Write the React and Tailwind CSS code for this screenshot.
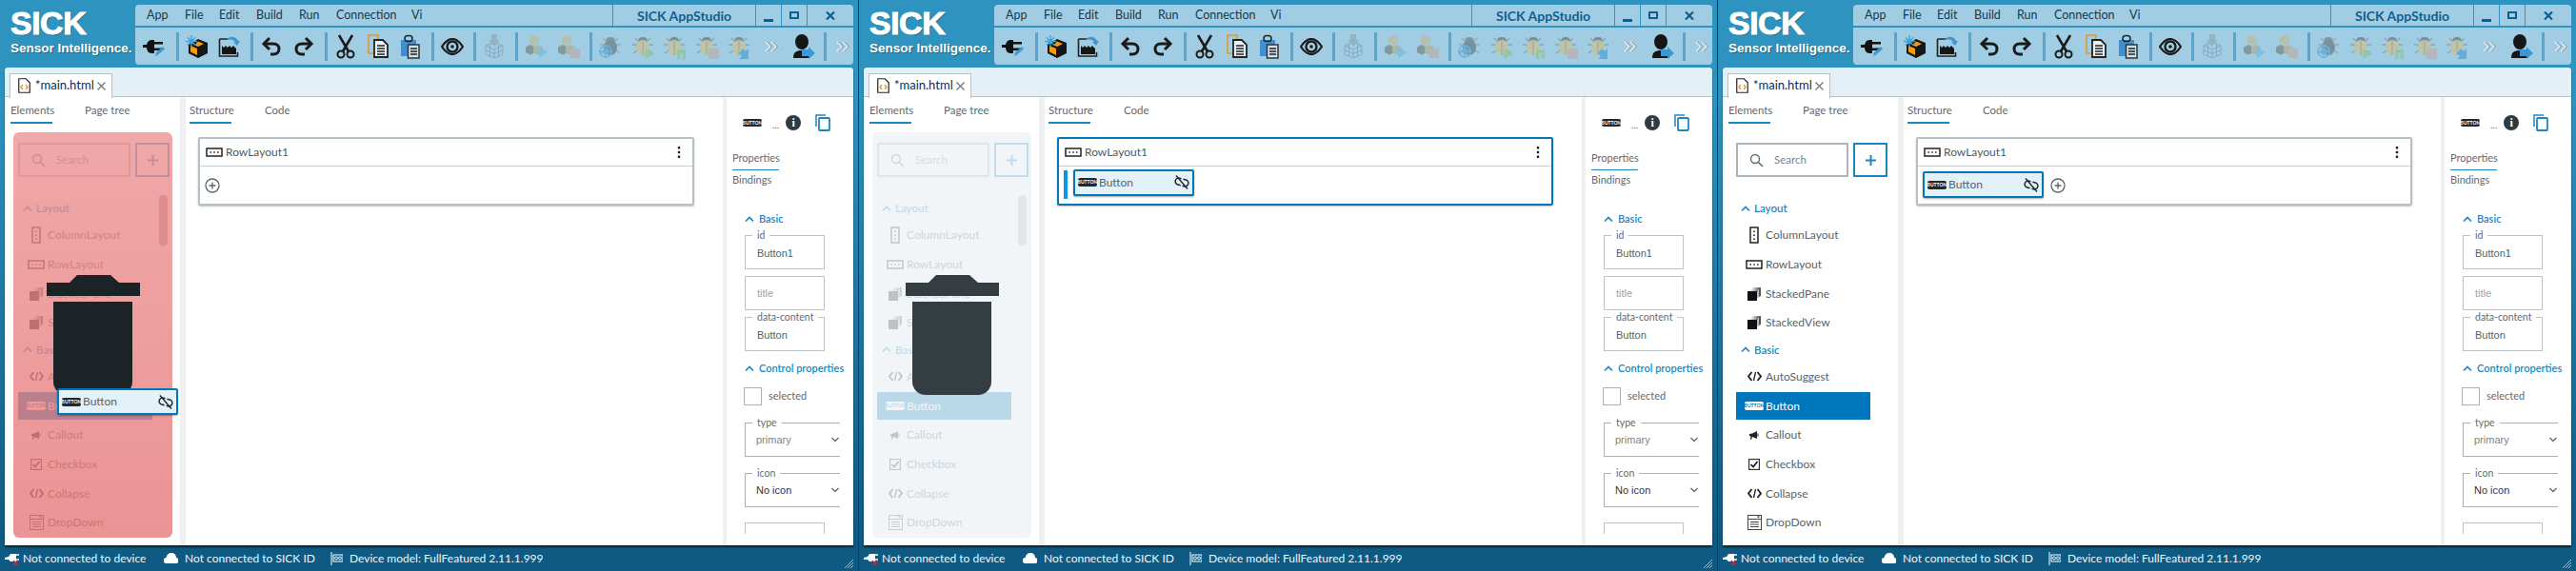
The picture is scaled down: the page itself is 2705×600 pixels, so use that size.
import React from "react";

const Svg = ({ w, h, vb, className = "", children }) => (
  <svg width={w} height={h} viewBox={vb || `0 0 ${w} ${h}`} className={`shrink-0 ${className}`}>{children}</svg>
);

const Plug = () => (
  <Svg w={24} h={22}>
    <path d="M0 9h4v3H0z" fill="#111" />
    <path d="M4 10c0-3 2-6 5-6h3v14H9c-3 0-5-3-5-6z" fill="#111" />
    <path d="M12 6h9v2.500h-9zM12 12.500h9V15h-9z" fill="#111" />
    <path d="M13 21l1-4 7-6 2 2.500-7 6z" fill="#3d9ad6" />
  </Svg>
);
const MagicBox = () => (
  <Svg w={24} h={24}>
    <path d="M13 4l10 4v11l-10 5-10-5V10z" fill="#161616" />
    <path d="M5 11l7 3v7l-7-3.500z" fill="#f59c12" />
    <path d="M13 6.500l6 2.500-6 3-3.500-1.500z" fill="#f59c12" />
    <path d="M6 0v13M0 6.500h12M2 2.500l8 8M10 2.500l-8 8" stroke="#3aa4e0" strokeWidth="1.300" />
    <circle cx="6" cy="6.500" r="2.500" fill="#3aa4e0" />
  </Svg>
);
const SaveImg = () => (
  <Svg w={24} h={24}>
    <path d="M1.500 4h9M1.500 4v18h19v-4" stroke="#222" strokeWidth="1.600" fill="none" />
    <path d="M4 20v-9l2 2 2-2 2 2 2-2 2 2 2-2 3 3v6z" fill="#161616" />
    <path d="M9 5c3-5 10-4 12 1l2 0-3 5-4-4 2 0c-2-3-6-3-9-2z" fill="#3c97d4" />
  </Svg>
);
const Undo = ({ flip }) => (
  <Svg w={22} h={22} className={flip ? "-scale-x-100" : ""}>
    <path d="M9 2L3 8l6 6" stroke="#1a1a1a" strokeWidth="3" fill="none" />
    <path d="M4 8h9c4 0 6 2.500 6 5.500S17 19 13 19h-3" stroke="#1a1a1a" strokeWidth="3" fill="none" />
  </Svg>
);
const ScissorsI = () => (
  <Svg w={20} h={26}>
    <path d="M3 1l10 17M17 1L7 18" stroke="#1a1a1a" strokeWidth="2.600" />
    <circle cx="5" cy="21" r="3.500" stroke="#1a1a1a" strokeWidth="2" fill="none" />
    <circle cx="15" cy="21" r="3.500" stroke="#1a1a1a" strokeWidth="2" fill="none" />
  </Svg>
);
const CopyI = () => (
  <Svg w={23} h={25}>
    <path d="M1 1h10v19H1z" stroke="#e09a2a" strokeWidth="1.600" fill="none" />
    <path d="M7 6h9l5 5v13H7z" fill="#e8f1f5" stroke="#222" strokeWidth="1.800" />
    <path d="M10 12h8M10 15h8M10 18h8M10 21h8" stroke="#222" strokeWidth="1.300" />
  </Svg>
);
const ClipI = () => (
  <Svg w={20} h={26}>
    <path d="M0 6h16v17H0z" fill="#3c91d6" />
    <rect x="4" y="1.500" width="8" height="6" rx="3" fill="none" stroke="#222" strokeWidth="1.500" />
    <path d="M7.500 11h11.500v14H7.500z" fill="#cfe0e8" stroke="#333" strokeWidth="1.500" />
    <path d="M10 15h7M10 18h7M10 21h7" stroke="#222" strokeWidth="1.300" />
  </Svg>
);
const EyeI = () => (
  <Svg w={24} h={18}>
    <path d="M1 9c4-6 8-8 11-8s7 2 11 8c-4 6-8 8-11 8S5 15 1 9z" fill="none" stroke="#1a1a1a" strokeWidth="2.200" />
    <circle cx="12" cy="9" r="5.500" fill="none" stroke="#1a1a1a" strokeWidth="2.400" />
    <circle cx="12" cy="9" r="1.800" fill="#1a1a1a" />
  </Svg>
);
const DeployI = () => (
  <Svg w={20} h={26} className="opacity-40">
    <path d="M1 12l9-4 9 4v9l-9 4-9-4zM1 12l9 4 9-4M10 16v9M5.500 10v13M14.500 10v13M1 16.500l9 4 9-4" fill="none" stroke="#5f7884" strokeWidth="1" />
    <path d="M7 0h6v6h3l-6 7-6-7h3z" fill="#7b8d96" />
  </Svg>
);
const Cubes = ({ overlay }) => (
  <Svg w={24} h={26}>
    <g opacity="0.55">
      <path d="M9 1l5 2.500v5.500l-5 2.500L4 9V3.500z" fill="#c7b680" />
      <path d="M5 11l5 2.500V19l-5 2.500L0 19v-5.500z" fill="#6d6f63" />
      <path d="M13 11l5 2.500V19l-5 2.500L8 19v-5.500z" fill="#b5a674" />
    </g>
    {overlay === "play" && <path d="M14 13l9 6-9 6z" fill="#7ebfe2" />}
    {overlay === "stop" && <path d="M13 15h10v10H13z" fill="#b3b6bd" />}
  </Svg>
);
const Bug = ({ overlay }) => (
  <Svg w={26} h={26}>
    <g opacity={overlay === "target" ? 0.5 : 0.6}>
      <path d="M4 4l4 4M20 4l-4 4M1 11h5M23 11h-5M2 20l4-3M22 20l-4-3" stroke="#7f8a8c" strokeWidth="1.300" />
      <ellipse cx="12" cy="6" rx="4.500" ry="3" fill="#5c6468" />
      <ellipse cx="12" cy="14" rx="7" ry="8" fill={overlay === "target" ? "#4f595e" : "#d2bf7c"} />
      {overlay !== "target" && <path d="M12 7v15" stroke="#8d8f83" strokeWidth="1" />}
    </g>
    {overlay === "target" && (
      <g fill="none" stroke="#6fb2dd" strokeWidth="1.500">
        <circle cx="7" cy="18" r="6" />
        <circle cx="7" cy="18" r="2.500" />
        <path d="M7 11v14M0 18h14" />
      </g>
    )}
    {overlay === "play" && <path d="M14 15l10 6-10 5z" fill="#93c8a6" />}
    {overlay === "pause" && <path d="M15 16h3.500v10H15zM20.500 16H24v10h-3.500z" fill="#93c8a6" />}
    {overlay === "stop" && <path d="M14 15h11v11H14z" fill="#b3b6bd" />}
    {overlay === "arrow" && <path d="M16 15l3 3 3-3v11H12l3-3-3-3z" fill="#62addd" />}
  </Svg>
);
const Chevrons = () => (
  <Svg w={14} h={12}>
    <path d="M1 1l5 5-5 5M7 1l5 5-5 5" fill="none" stroke="#f1f4f5" strokeWidth="1.300" />
    <path d="M2.500 1l5 5-5 5M8.500 1l5 5-5 5" fill="none" stroke="#8b8f92" strokeWidth="1" />
  </Svg>
);
const Person = () => (
  <Svg w={24} h={26}>
    <ellipse cx="10" cy="8" rx="7" ry="8" fill="#161616" />
    <path d="M1 25c0-6 3-8 9-8s9 2 9 8z" fill="#161616" />
    <path d="M10 16h7v-3l7 7-7 6v-3h-7z" fill="#3c97d4" />
  </Svg>
);

const Divider = () => <div className="h-[30px] w-[3px] shrink-0 bg-[#55a6d3]" />;
const T = ({ children }) => <div className="flex w-[34px] shrink-0 justify-center">{children}</div>;
const T7 = ({ children }) => <div className="flex w-[33.700px] shrink-0 justify-center">{children}</div>;

const Toolbar = () => (
  <div className="flex h-[39px] items-center pt-[1px]">
    <div className="flex w-[43px] shrink-0 pl-[3px]"><T><Plug /></T></div>
    <Divider />
    <div className="flex w-[75px] shrink-0 pl-[2px]"><T><MagicBox /></T><T><SaveImg /></T></div>
    <Divider />
    <div className="flex w-[75px] shrink-0 pl-[2px]"><T><Undo /></T><T><Undo flip /></T></div>
    <Divider />
    <div className="flex w-[109px] shrink-0 pl-[2px]"><T><ScissorsI /></T><T><CopyI /></T><T><ClipI /></T></div>
    <Divider />
    <div className="flex w-[41px] shrink-0 pl-[2px]"><T><EyeI /></T></div>
    <Divider />
    <div className="flex w-[41px] shrink-0 pl-[2px]"><T><DeployI /></T></div>
    <Divider />
    <div className="flex w-[75px] shrink-0 pl-[3px]"><T><Cubes overlay="play" /></T><T><Cubes overlay="stop" /></T></div>
    <Divider />
    <div className="flex w-[243px] shrink-0 items-center pl-[3px]">
      <T7><Bug overlay="target" /></T7><T7><Bug overlay="play" /></T7><T7><Bug overlay="pause" /></T7><T7><Bug overlay="stop" /></T7><T7><Bug overlay="arrow" /></T7><T7><Chevrons /></T7><T7><Person /></T7>
    </div>
    <Divider />
    <div className="flex w-[28px] shrink-0 justify-center pl-[6px]"><Chevrons /></div>
  </div>
);

const MenuBar = () => (
  <div className="box-content flex h-[22px] items-center border-b-[2px] border-[#2e93bf] text-[12.500px] text-[#16394d]">
    <div className="flex flex-1 items-center pl-[12px]">
      <span className="w-[40px]">App</span>
      <span className="w-[36px]">File</span>
      <span className="w-[39px]">Edit</span>
      <span className="w-[45px]">Build</span>
      <span className="w-[39px]">Run</span>
      <span className="w-[79px]">Connection</span>
      <span>Vi</span>
    </div>
    <div className="flex h-full w-[150px] items-center justify-center border-l border-[#2e93bf] text-[14px] font-bold text-[#0f5f8e]">SICK AppStudio</div>
    <div className="flex h-full w-[27px] items-end justify-center border-l border-[#2e93bf] pb-[4px]"><div className="h-[3px] w-[10px] bg-[#0f5f8e]" /></div>
    <div className="flex h-full w-[27px] items-center justify-center border-l border-[#2e93bf]"><div className="h-[8px] w-[10px] border-[2px] border-[#0f5f8e]" /></div>
    <div className="flex h-full w-[49px] items-center justify-center border-l border-[#2e93bf]">
      <Svg w={10} h={9}><path d="M1 0.500l8 8M9 0.500l-8 8" stroke="#0f5f8e" strokeWidth="2.200" /></Svg>
    </div>
  </div>
);

const Chip = ({ light, w = 20, h = 9 }) => (
  <div className={`flex shrink-0 items-center justify-center rounded-[2px] text-[5px] font-bold leading-none ${light ? "bg-white text-[#0077b8]" : "bg-[#23282c] text-white"}`} style={{ width: w, height: h }}>BUTTON</div>
);

const ColIcon = () => (
  <Svg w={10} h={18}>
    <rect x="1" y="1" width="8" height="16" fill="none" stroke="#222" strokeWidth="1.500" />
    <path d="M5 4.500v1.500M5 8.500V10M5 12.500V14" stroke="#222" strokeWidth="1.600" />
  </Svg>
);
const RowIcon = () => (
  <Svg w={18} h={10}>
    <rect x="1" y="1" width="16" height="8" fill="none" stroke="#222" strokeWidth="1.500" />
    <path d="M4.500 5H6M8.300 5h1.500M12 5h1.500" stroke="#222" strokeWidth="1.600" />
  </Svg>
);
const StackIcon = () => (
  <Svg w={14} h={14}>
    <path d="M4 1l10-1v9l-2 1V2z" fill="#555" />
    <path d="M2.500 3l9-1v9h-1V4z" fill="#777" />
    <path d="M0 4h10v10H0z" fill="#111" />
  </Svg>
);
const CodeIcon = () => (
  <Svg w={15} h={11}>
    <path d="M4.500 1L1 5.500 4.500 10M10.500 1L14 5.500 10.500 10" fill="none" stroke="#222" strokeWidth="1.800" />
    <path d="M8.500 1l-2 9" stroke="#222" strokeWidth="1.300" />
  </Svg>
);
const CalloutIcon = () => (
  <Svg w={10} h={9}>
    <path d="M0 3l3-.5L8 0v8L3 6 2 9H1l.5-3.500L0 5z" fill="#222" />
    <path d="M9 2.500v3" stroke="#222" strokeWidth="1" />
  </Svg>
);
const CheckIcon = () => (
  <Svg w={12} h={12}>
    <rect x="0.600" y="0.600" width="10.800" height="10.800" fill="none" stroke="#333" strokeWidth="1.200" />
    <path d="M2.500 6l2.500 2.500L9.500 3" fill="none" stroke="#111" strokeWidth="1.600" />
  </Svg>
);
const DropIcon = () => (
  <Svg w={15} h={16}>
    <rect x="0.500" y="0.500" width="14" height="15" fill="none" stroke="#444" strokeWidth="1" />
    <path d="M1 4.500h13M3 7.500h9M3 10h9M3 12.500h9" stroke="#444" strokeWidth="1" />
    <path d="M10 1.500h3L11.500 3.500z" fill="#333" />
  </Svg>
);
const SearchIcon = () => (
  <Svg w={15} h={15}>
    <circle cx="6" cy="6" r="4.500" fill="none" stroke="#5e6a72" strokeWidth="1.400" />
    <path d="M9.500 9.500l4.500 4.500" stroke="#5e6a72" strokeWidth="1.600" />
  </Svg>
);
const Caret = ({ color = "#1b86c4" }) => (
  <Svg w={10} h={7}><path d="M1 5.500l4-4 4 4" fill="none" stroke={color} strokeWidth="1.700" /></Svg>
);
const Unlink = () => (
  <Svg w={16} h={15}>
    <path d="M6.500 4H4.500a3.500 3.500 0 0 0 0 7H7.500M9.500 11h2a3.500 3.500 0 0 0 0-7H8.500" fill="none" stroke="#1f2a30" strokeWidth="1.500" transform="rotate(15 8 7.500)" />
    <path d="M2 0.500L14 14.500" stroke="#1f2a30" strokeWidth="1.400" />
  </Svg>
);
const PlusCircle = () => (
  <Svg w={16} h={16}>
    <circle cx="8" cy="8" r="7" fill="none" stroke="#59656c" strokeWidth="1.300" />
    <path d="M8 4.500v7M4.500 8h7" stroke="#59656c" strokeWidth="1.300" />
  </Svg>
);

const Item = ({ icon, label, active }) => (
  <div className="flex h-[30.670px] items-center">
    <div className={`flex h-[29px] w-[141px] items-center pl-[7px] ${active ? "bg-[#0077bc] text-white" : "text-[#59636a]"}`}>
      <div className="flex w-[24px] shrink-0 justify-center">{icon}</div>
      <span>{label}</span>
    </div>
  </div>
);
const GroupHead = ({ label }) => (
  <div className="flex h-[26px] items-center gap-[4px] pl-[5px] text-[11.500px] font-semibold text-[#1b86c4]">
    <Caret />
    <span>{label}</span>
  </div>
);

const GhostButton = ({ className = "" }) => (
  <div className={`flex h-[28px] w-[127px] items-center justify-between rounded-[2px] border-[2.500px] border-[#0077b8] bg-[#e3f1f9] pl-[3px] pr-[3px] text-[12px] text-[#59636a] shadow-[0_1px_2px_rgba(0,0,0,0.35)] ${className}`}>
    <div className="flex items-center gap-[2px]"><Chip />Button</div>
    <Unlink />
  </div>
);

const Trash = ({ color }) => (
  <Svg w={98} h={126} className="absolute left-[35px] top-[150px] z-20">
    <path d="M0 8h24L32 0h35l9 8h22v14H0z" fill={color} />
    <path d="M7 28h83v84a14 14 0 0 1-14 14H21a14 14 0 0 1-14-14z" fill={color} />
  </Svg>
);

const Tabs = ({ a, b, bLeft, w }) => (
  <div className="flex h-[28px] pl-[6px] pt-[4px] text-[11.500px] text-[#5f6a71]">
    <div className="relative h-[24px] whitespace-nowrap leading-[20px]" style={{ width: w }}>
      {a}
      <div className="absolute bottom-0 left-0 h-[2px] w-full bg-[#1b86c4]" />
    </div>
    <div className="leading-[20px]" style={{ marginLeft: bLeft }}>{b}</div>
  </div>
);

const Sidebar = ({ mode }) => (
  <div className="w-[184px] shrink-0">
    <Tabs a="Elements" b="Page tree" w={44} bLeft={34} />
    <div className="relative ml-[9px] mt-[9px] h-[426px] w-[167px] text-[12px]">
      <div className="pl-[5px] pt-[11px]">
        <div className="flex gap-[5px]">
          <div className="flex h-[36px] w-[118px] items-center gap-[11px] border-[2px] border-[#aab4ba] pl-[12px] text-[11.500px] text-[#7b858b]">
            <SearchIcon />Search
          </div>
          <div className="flex h-[36px] w-[36px] items-center justify-center border-[2px] border-[#1b86c4]">
            <Svg w={13} h={13}><path d="M6.500 1v11M1 6.500h11" stroke="#1b86c4" strokeWidth="2" /></Svg>
          </div>
        </div>
        <div className="mt-[20px]">
          <GroupHead label="Layout" />
          <Item icon={<ColIcon />} label="ColumnLayout" />
          <Item icon={<RowIcon />} label="RowLayout" />
          <Item icon={<StackIcon />} label="StackedPane" />
          <Item icon={<StackIcon />} label="StackedView" />
          <GroupHead label="Basic" />
          <Item icon={<CodeIcon />} label="AutoSuggest" />
          <Item icon={<Chip light />} label="Button" active />
          <Item icon={<CalloutIcon />} label="Callout" />
          <Item icon={<CheckIcon />} label="Checkbox" />
          <Item icon={<CodeIcon />} label="Collapse" />
          <Item icon={<DropIcon />} label="DropDown" />
        </div>
      </div>
      {mode === "delete" && (
        <>
          <div className="absolute inset-0 z-10 rounded-[6px] bg-gradient-to-b from-[rgba(236,146,146,0.8)] to-[rgba(231,120,122,0.8)]">
            <div className="absolute left-[153px] top-[66px] h-[53px] w-[9px] rounded-[4px] bg-[#dd8d90]" />
          </div>
          <Trash color="#1c2327" />
          <GhostButton className="absolute left-[46px] top-[269px] z-30" />
        </>
      )}
      {mode === "drop" && (
        <>
          <div className="absolute inset-0 z-10 rounded-[6px] bg-[rgba(237,242,245,0.79)]">
            <div className="absolute left-[153px] top-[66px] h-[53px] w-[9px] rounded-[4px] bg-[#e3e7ea]" />
          </div>
          <Trash color="#333d42" />
        </>
      )}
    </div>
  </div>
);

const Card = ({ mode }) => (
  <div className={`ml-[13px] mt-[14px] h-[72px] w-[521px] rounded-[2px] text-[12px] text-[#59636a] shadow-[0_1px_2px_rgba(0,0,0,0.25)] ${mode === "drop" ? "border-[2.500px] border-[#0077b8]" : "border-[2px] border-[#b4bfc6]"}`}>
    <div className="flex h-[29px] items-center justify-between border-b-[1.500px] border-[#c6ced3] pl-[6px] pr-[12px]">
      <div className="flex items-center gap-[3px]"><RowIcon /><span className="text-[#4f5a61]">RowLayout1</span></div>
      <Svg w={4} h={14}><path d="M2 1v2.500M2 5.800v2.500M2 10.500V13" stroke="#222" strokeWidth="2.400" /></Svg>
    </div>
    {mode === "delete" && <div className="flex h-[39px] items-center pl-[5px]"><PlusCircle /></div>}
    {mode === "drop" && (
      <div className="flex h-[38px] items-center pl-[5px]">
        <div className="h-[30px] w-[4px] bg-[#0a96e6]" />
        <GhostButton className="mb-[5px] ml-[6px]" />
      </div>
    )}
    {mode === "done" && (
      <div className="flex h-[39px] items-center pl-[5px]">
        <GhostButton className="mb-[1px]" />
        <div className="ml-[7px]"><PlusCircle /></div>
      </div>
    )}
  </div>
);

const Field = ({ label, value, placeholder, mt = "" }) => (
  <div className={`relative ml-[19px] flex h-[36px] w-[84px] items-center border-[1.500px] border-[#bcc4c9] pl-[12px] font-['Liberation_Sans',sans-serif] text-[11px] ${mt} ${placeholder ? "text-[#9aa3a9]" : "text-[#555f66]"}`}>
    {label && <span className="absolute -top-[8px] left-[7px] bg-white px-[5px] font-['Lato',sans-serif] text-[10.500px] leading-[14px] text-[#5f6a71]">{label}</span>}
    <span className={label ? "mt-[3px]" : ""}>{value}</span>
  </div>
);
const SelectF = ({ label, value, dark, mt }) => (
  <div className={`relative ml-[19px] flex h-[36px] w-[100px] items-center justify-between border-b-[1.500px] border-l-[1.500px] border-t-[1.500px] border-[#a9b2b8] pl-[11px] pr-[1px] font-['Liberation_Sans',sans-serif] text-[11px] ${mt} ${dark ? "text-[#333]" : "text-[#7b858b]"}`}>
    <span className="absolute -top-[8px] left-[7px] bg-white px-[5px] font-['Lato',sans-serif] text-[10.500px] leading-[14px] text-[#5f6a71]">{label}</span>
    <span className="mt-[1px]">{value}</span>
    <Svg w={8} h={6}><path d="M0.500 1l3.500 3.500L7.500 1" fill="none" stroke="#5f6a71" strokeWidth="1.300" /></Svg>
  </div>
);

const RightPanel = () => (
  <div className="h-full w-[133px] shrink-0 overflow-hidden text-[11px] text-[#5f6a71]">
    <div className="flex h-[54px] items-center pl-[17px]">
      <Chip w={20} h={8} />
      <span className="ml-[11px] mt-[4px] text-[10px] leading-none">...</span>
      <div className="ml-[7px] flex h-[16px] w-[16px] items-center justify-center rounded-full bg-[#2f3a41] font-['Liberation_Serif',serif] text-[12px] font-bold leading-none text-white">i</div>
      <Svg w={16} h={18} className="ml-[15px]">
        <path d="M1 13V1h10" fill="none" stroke="#1b86c4" strokeWidth="1.500" />
        <rect x="4" y="4" width="11" height="13" rx="1" fill="none" stroke="#1b86c4" strokeWidth="1.800" />
      </Svg>
    </div>
    <div className="relative ml-[6px] h-[23px] w-[49px] pt-[1px] leading-[18px]">Properties<div className="absolute bottom-0 left-0 h-[1.500px] w-full bg-[#1b86c4]" /></div>
    <div className="ml-[6px] mt-[1px] leading-[18px]">Bindings</div>
    <div className="ml-[19px] mt-[24px] flex h-[16px] items-center gap-[5px] font-semibold text-[#1b86c4]"><Caret /><span>Basic</span></div>
    <Field label="id" value="Button1" mt="mt-[9px]" />
    <Field value="title" placeholder mt="mt-[7px]" />
    <Field label="data-content" value="Button" mt="mt-[7px]" />
    <div className="ml-[19px] mt-[10px] flex h-[16px] items-center gap-[5px] whitespace-nowrap font-semibold text-[#1b86c4]"><Caret /><span>Control properties</span></div>
    <div className="ml-[18px] mt-[12px] flex h-[19px] items-center gap-[7px]">
      <div className="h-[19px] w-[19px] border-[1.500px] border-[#a9b2b8]" />
      <span>selected</span>
    </div>
    <SelectF label="type" value="primary" mt="mt-[18px]" />
    <SelectF label="icon" value="No icon" dark mt="mt-[17px]" />
    <div className="ml-[19px] mt-[16px] h-[12px] w-[84px] border-[1.500px] border-b-0 border-[#bcc4c9]" />
  </div>
);

const StatusBar = () => (
  <div className="relative flex h-[27px] items-center pl-[5px] text-[12px] text-[#eef5f9]">
    <Svg w={16} h={13} className="mt-[2px]">
      <path d="M0 5l4-1 2-3h6v8H6L4 7H0z" fill="#fff" />
      <path d="M12 2h3M12 7h3" stroke="#fff" strokeWidth="1.300" />
      <path d="M9 8l5 5M14 8l-5 5" stroke="#e02020" strokeWidth="1.300" />
    </Svg>
    <span className="ml-[3px] mt-[1px] w-[148px]">Not connected to device</span>
    <Svg w={15} h={11}><path d="M3 11a3 3 0 0 1-.500-6C3 2 5 0 8 0s5 2 5 5a3 3 0 0 1-1 6z" fill="#fff" /></Svg>
    <span className="ml-[7px] w-[153px]">Not connected to SICK ID</span>
    <Svg w={13} h={14}>
      <path d="M1 0v14" stroke="#fff" strokeWidth="1" />
      <rect x="3" y="3" width="10" height="7" fill="none" stroke="#fff" strokeWidth="1" />
      <circle cx="6" cy="6.500" r="1.500" fill="none" stroke="#fff" strokeWidth="1" />
      <circle cx="10" cy="6.500" r="1.500" fill="none" stroke="#fff" strokeWidth="1" />
    </Svg>
    <span className="ml-[7px]">Device model: FullFeatured 2.11.1.999</span>
    <Svg w={9} h={9} className="absolute left-[887px] top-[15px]">
      <path d="M0 9l9-9M3 9l6-6M6 9l3-3" stroke="#b9c9d2" strokeWidth="0.900" />
    </Svg>
  </div>
);

const Window = ({ mode, last }) => (
  <div className={`flex h-[600px] flex-col overflow-hidden bg-gradient-to-b from-[#2e93bf] from-[17%] to-[#0e5a82] to-[95%] font-['Lato',sans-serif] ${last ? "w-[901px]" : "w-[902px] border-r border-[#12385f]"}`}>
    <div className="flex h-[71px] shrink-0">
      <div className="w-[142px] shrink-0 pl-[11px] pt-[7px] font-['Liberation_Sans',sans-serif] font-bold text-white">
        <div className="h-[34px] text-[34px] leading-[34px] tracking-[-0.500px] [-webkit-text-stroke:1px_white] [text-shadow:1px_1px_1px_rgba(0,0,0,0.35)]">SICK</div>
        <div className="mt-[2px] whitespace-nowrap text-[13.500px] leading-[16px] [text-shadow:1px_1px_1px_rgba(0,0,0,0.35)]">Sensor Intelligence.</div>
      </div>
      <div className="mt-[5px] h-[63px] w-[754px] shrink-0 rounded-[4px] bg-[#a0cde3]">
        <MenuBar />
        <Toolbar />
      </div>
    </div>
    <div className="ml-[5px] h-[502px] w-[891px] shrink-0 overflow-hidden rounded-t-[4px] bg-white shadow-[0_2px_2px_rgba(0,0,0,0.6)]">
      <div className="flex h-[31px] items-end border-b-[1.500px] border-[#b5c0c8] bg-[#e3f0f8] pl-[5px]">
        <div className="-mb-[1.500px] flex h-[26px] w-[108px] items-center border-[1.500px] border-b-0 border-[#b5c0c8] bg-white pl-[8px] text-[13px] text-[#0e2c48]">
          <Svg w={13} h={16}>
            <path d="M0.750 0.750h7.500l4 4v10.500H0.750z" fill="#fff" stroke="#222" strokeWidth="1.200" />
            <path d="M5 7L3 9.500 5 12M8 7l2 2.500L8 12" fill="none" stroke="#e8941c" strokeWidth="1.300" />
          </Svg>
          <span className="ml-[5px]">*main.html</span>
          <Svg w={9} h={9} className="ml-[3px]"><path d="M0.500 0.500l8 8M8.500 0.500l-8 8" stroke="#6b767d" strokeWidth="1.200" /></Svg>
        </div>
      </div>
      <div className="flex h-[471px]">
        <Sidebar mode={mode} />
        <div className="h-full w-[6px] shrink-0 bg-[#eef0f1]" />
        <div className="w-[564px] shrink-0">
          <div className="-ml-[2px]"><Tabs a="Structure" b="Code" w={44} bLeft={35} /></div>
          <Card mode={mode} />
        </div>
        <div className="h-full w-[4px] shrink-0 bg-[#eef0f1]" />
        <RightPanel />
      </div>
    </div>
    <StatusBar />
  </div>
);

export default function App() {
  return (
    <div className="flex h-[600px] w-[2705px] overflow-hidden">
      <Window mode="delete" />
      <Window mode="drop" />
      <Window mode="done" last />
    </div>
  );
}
